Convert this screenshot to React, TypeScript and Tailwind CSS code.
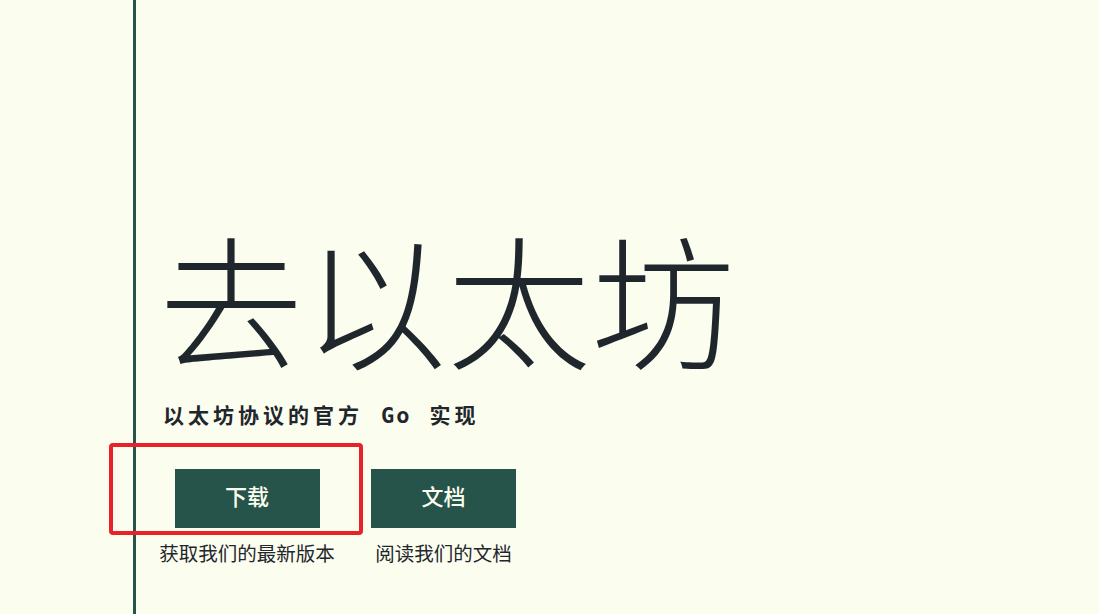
import React from 'react';

const cjk = '"Noto Sans CJK SC", sans-serif';

const actions = [
  { label: '下载', caption: '获取我们的最新版本', width: 'w-[176px]' },
  { label: '文档', caption: '阅读我们的文档', width: 'w-[145px]' },
];

const App = () => {
  return (
    <div className="relative h-[614px] w-[1099px] overflow-hidden bg-[#fbfdef]" style={{ fontFamily: cjk }}>
      <div className="ml-[133px] flex h-full border-l-[3px] border-[#26544a]">
        <div className="flex flex-col pl-[23px] pt-[211px]">
          <h1 className="text-[144px] font-light leading-[170px] text-[#1f262c]">去以太坊</h1>
          <p className="mt-[19px] whitespace-nowrap pl-[4px] text-[21px] font-bold leading-[28px] tracking-[4px] text-[#1f262c]">
            以太坊协议的官方
            <span className="mx-[18px] font-['DejaVu_Sans_Mono'] text-[22px] tracking-[2px]">Go</span>
            实现
          </p>
          <div className="mt-[39px] flex gap-[36px]">
            {actions.map((a) => (
              <div key={a.label} className={`flex flex-col items-center ${a.width}`}>
                <div className="flex h-[59px] w-[145px] items-center justify-center bg-[#26544a] pb-[6px] text-[22px] font-medium text-[#fbfdef]">
                  {a.label}
                </div>
                <div className="mt-[13px] whitespace-nowrap text-[19.5px] leading-[24px] text-[#1f262c]">{a.caption}</div>
              </div>
            ))}
          </div>
        </div>
      </div>
      {/* annotation box */}
      <div className="absolute left-[109px] top-[443px] h-[92px] w-[254px] rounded-[4px] border-[4px] border-[#e8212b]" />
    </div>
  );
};

export default App;
